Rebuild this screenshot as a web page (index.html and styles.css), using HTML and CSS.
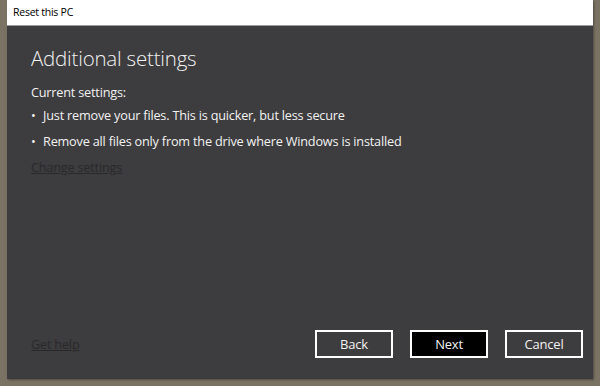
FILE: index.html
```html
<!DOCTYPE html>
<html>
<head>
<meta charset="utf-8">
<link rel="stylesheet" href="styles.css">
</head>
<body>
<div class="window">
  <div class="titlebar">Reset this PC</div>
  <div class="content">
    <div class="main">
      <h1 class="heading">Additional settings</h1>
      <p class="label">Current settings:</p>
      <ul class="list">
        <li>Just remove your files. This is quicker, but less secure</li>
        <li>Remove all files only from the drive where Windows is installed</li>
      </ul>
      <a class="link change">Change settings</a>
    </div>
    <div class="footer">
      <a class="link help">Get help</a>
      <div class="buttons">
        <button class="btn">Back</button>
        <button class="btn primary">Next</button>
        <button class="btn">Cancel</button>
      </div>
    </div>
  </div>
</div>
</body>
</html>
```
FILE: styles.css
```css
html, body {
  margin: 0;
  padding: 0;
}
body {
  width: 600px;
  height: 386px;
  background: #7a7262;
  font-family: "Open Sans", "Noto Sans", sans-serif;
  overflow: hidden;
}
.window {
  margin-left: 7px;
  width: 586px;
  height: 379px;
  display: flex;
  flex-direction: column;
  background: #3d3c3e;
  box-shadow: 1px 1px 2px rgba(0,0,0,0.35);
}
.titlebar {
  height: 26px;
  box-sizing: border-box;
  background: #ffffff;
  border-bottom: 1px solid #9c9c9c;
  color: #000;
  font-size: 10.5px;
  line-height: 25px;
  padding-left: 6px;
  letter-spacing: -0.25px;
}
.content {
  flex: 1;
  display: flex;
  flex-direction: column;
  padding: 0 10px 21px 24px;
  color: #f2f2f2;
}
.main {
  flex: 1;
}
.heading {
  margin: 17px 0 0 0;
  font-weight: 300;
  font-size: 20.5px;
  line-height: 30px;
  letter-spacing: -0.2px;
}
.label {
  margin: 10px 0 0 0;
  font-size: 12.7px;
  line-height: 18px;
  letter-spacing: -0.2px;
}
.list {
  list-style: none;
  margin: 5px 0 0 0;
  padding: 0;
  font-size: 12.7px;
  line-height: 18px;
  letter-spacing: -0.2px;
}
.list li {
  margin-bottom: 8px;
}
.list li::before {
  content: "•";
  display: inline-block;
  width: 12px;
}
.link {
  color: #29292b;
  text-decoration: underline;
  font-size: 12.7px;
  line-height: 18px;
  letter-spacing: -0.2px;
}
.change {
  display: block;
  width: max-content;
  margin-top: 0;
}
.footer {
  display: flex;
  align-items: center;
  justify-content: space-between;
}
.buttons {
  display: flex;
  gap: 17px;
}
.btn {
  width: 78px;
  height: 28px;
  box-sizing: border-box;
  border: 2px solid #ffffff;
  background: #3d3c3e;
  color: #f2f2f2;
  font-family: "Open Sans", "Noto Sans", sans-serif;
  font-size: 13px;
  letter-spacing: -0.2px;
  padding: 0;
}
.btn.primary {
  background: #000000;
}
```
